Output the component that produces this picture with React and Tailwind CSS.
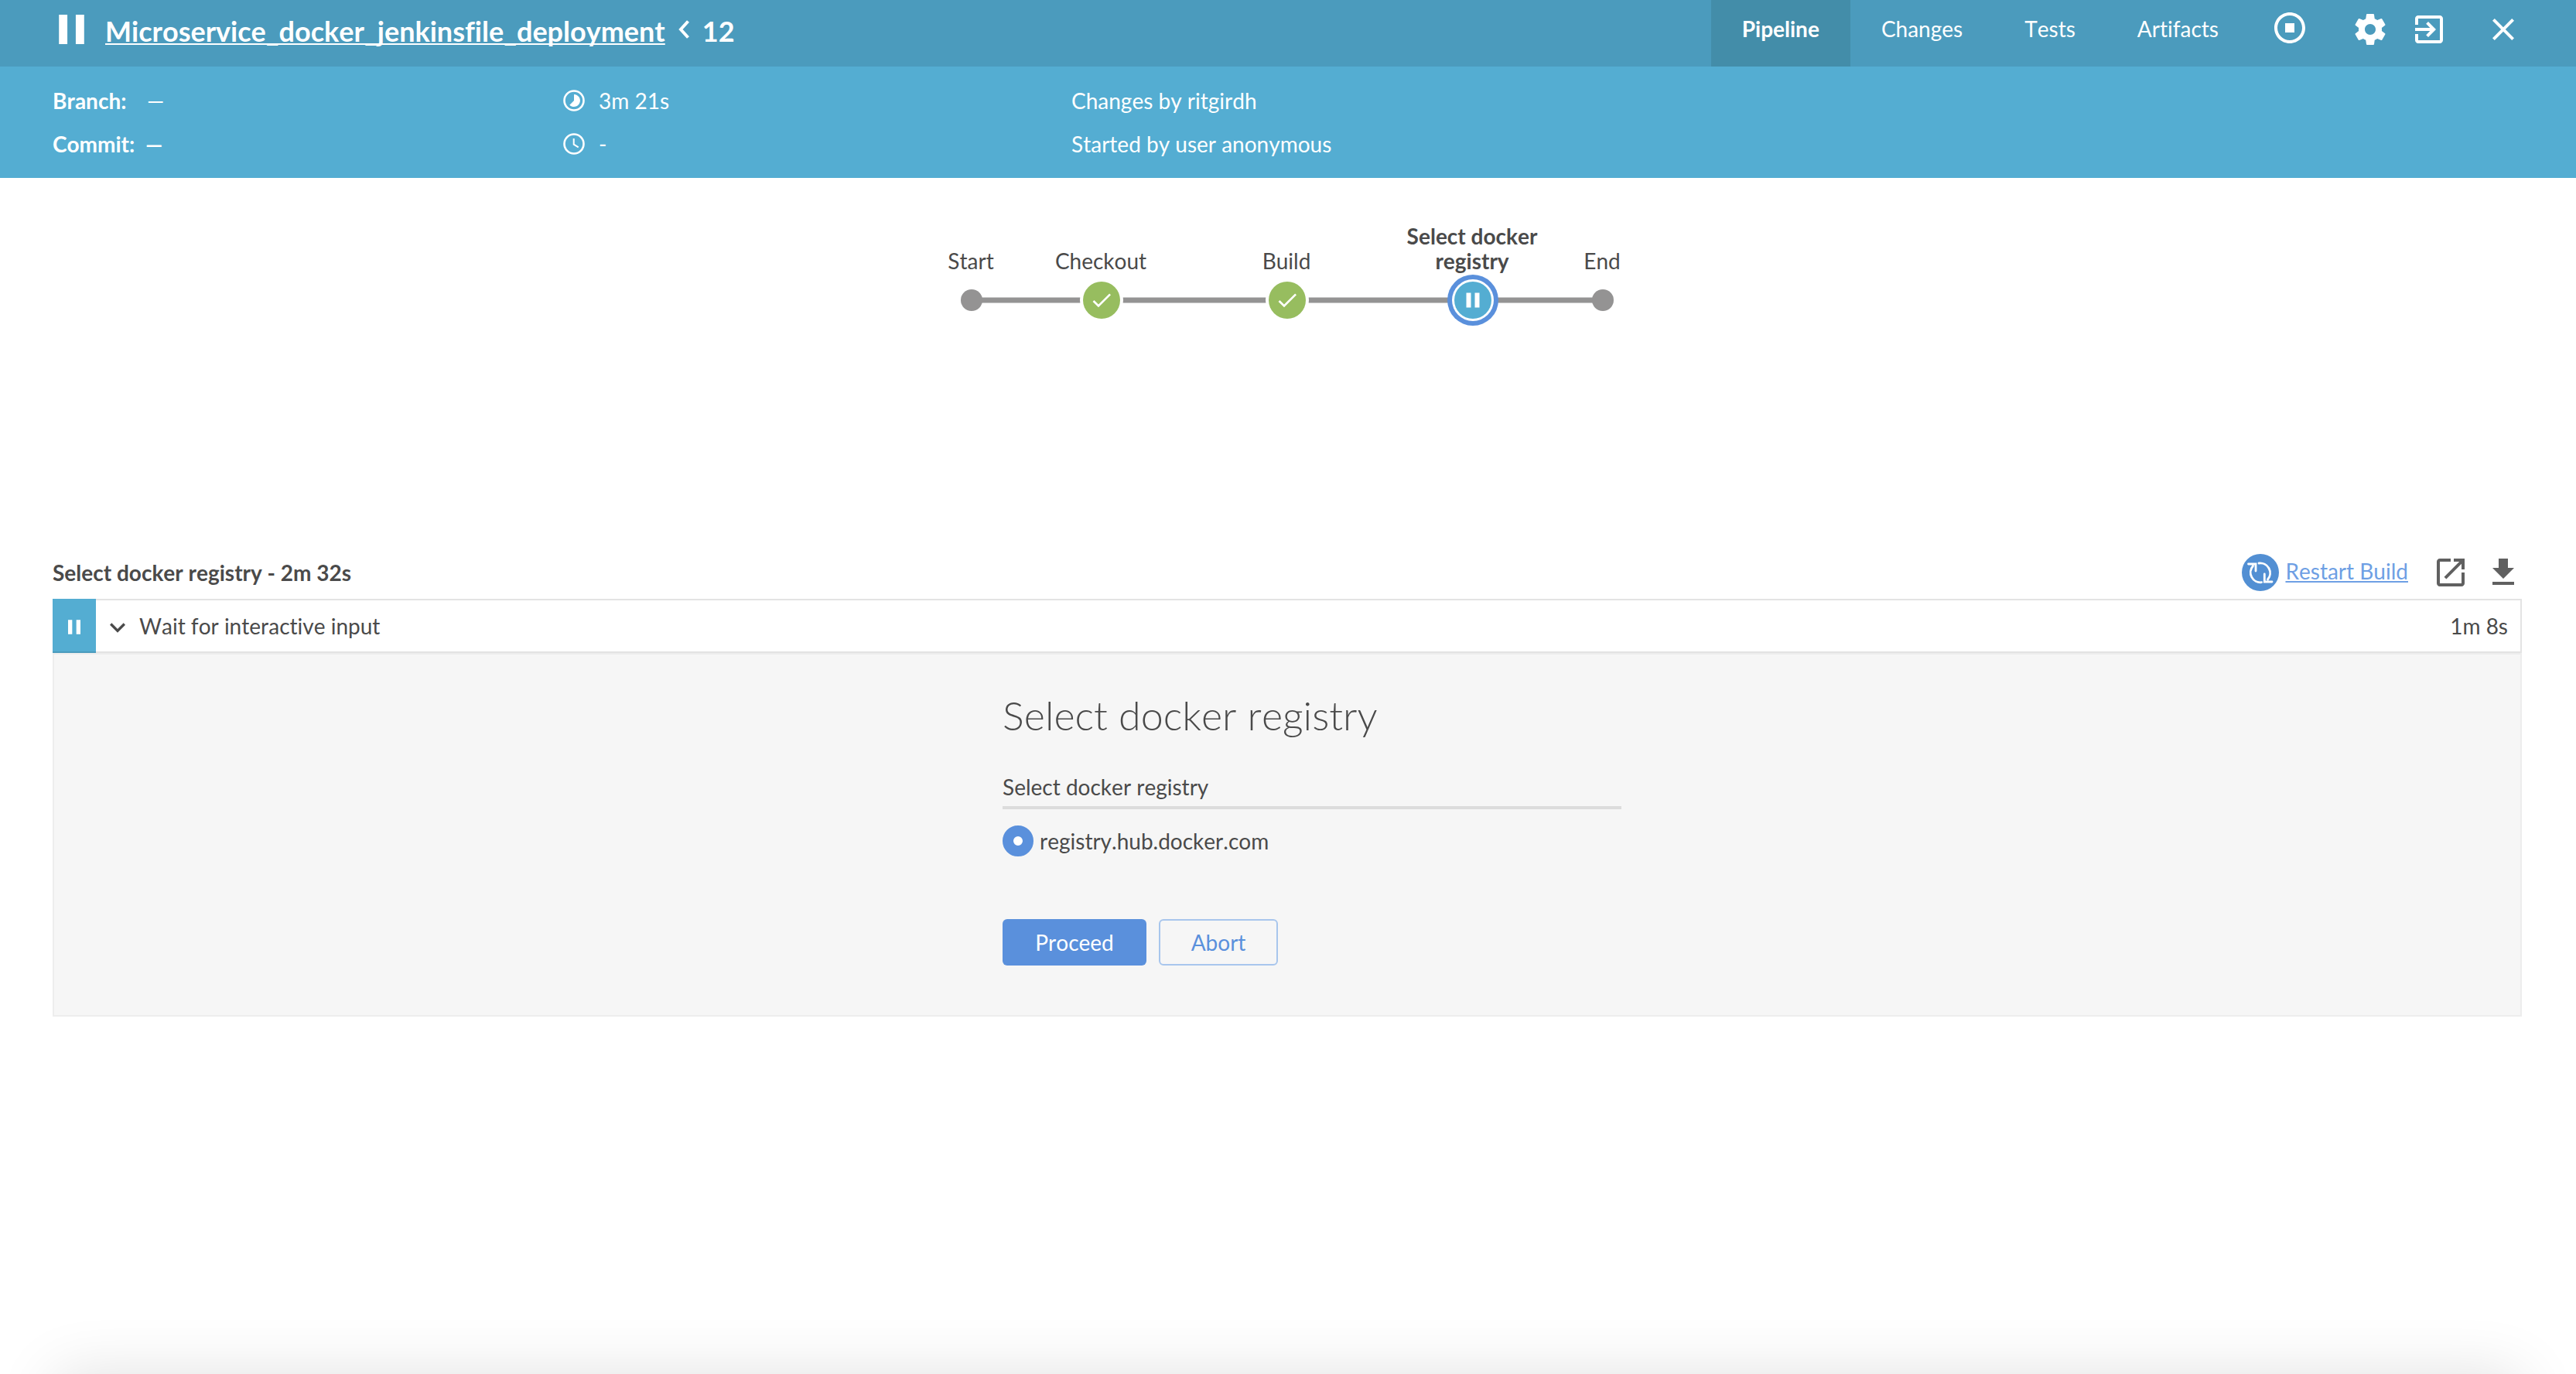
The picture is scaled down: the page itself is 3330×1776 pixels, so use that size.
import React from "react";

const STAGES = [
  { name: "Start", x: 39, kind: "end", place: "left-[38px]" },
  { name: "Checkout", x: 207, kind: "done", place: "left-[206px]" },
  { name: "Build", x: 447, kind: "done", place: "left-[446px]" },
  { name: "Select docker registry", x: 687, kind: "paused", place: "left-[686px]" },
  { name: "End", x: 855, kind: "end", place: "left-[854px]" },
];

const TABS = ["Changes", "Tests", "Artifacts"];

function Icon({ d, className = "size-12" }) {
  return (
    <svg className={className} viewBox="0 0 24 24" fill="currentColor" aria-hidden="true">
      <path d={d} />
    </svg>
  );
}

const ICONS = {
  stop: "M12 2C6.480 2 2 6.480 2 12s4.480 10 10 10 10-4.480 10-10S17.520 2 12 2zm0 18c-4.420 0-8-3.580-8-8s3.580-8 8-8 8 3.580 8 8-3.580 8-8 8zM9 9h6v6H9z",
  settings:
    "M19.430 12.980c.04-.32.07-.64.07-.98s-.03-.66-.07-.98l2.110-1.650c.19-.15.24-.42.12-.64l-2-3.460c-.12-.22-.39-.3-.61-.22l-2.490 1c-.52-.4-1.080-.73-1.690-.98l-.38-2.650C14.460 2.180 14.250 2 14 2h-4c-.25 0-.46.18-.49.42l-.38 2.650c-.61.25-1.170.59-1.690.98l-2.490-1c-.23-.09-.49 0-.61.22l-2 3.460c-.13.22-.07.49.12.64l2.110 1.650c-.04.32-.07.65-.07.98s.03.66.07.98l-2.110 1.650c-.19.15-.24.42-.12.64l2 3.460c.12.22.39.3.61.22l2.490-1c.52.4 1.080.73 1.690.98l.38 2.650c.03.24.24.42.49.42h4c.25 0 .46-.18.49-.42l.38-2.650c.61-.25 1.170-.59 1.690-.98l2.490 1c.23.09.49 0 .61-.22l2-3.460c.12-.22.07-.49-.12-.64l-2.110-1.650zM12 15.500c-1.930 0-3.500-1.570-3.500-3.500s1.570-3.500 3.500-3.500 3.500 1.570 3.500 3.500-1.570 3.500-3.500 3.500z",
  exit: "M10.090 15.590L11.500 17l5-5-5-5-1.410 1.410L12.670 11H3v2h9.670l-2.580 2.590zM19 3H5c-1.110 0-2 .9-2 2v4h2V5h14v14H5v-4H3v4c0 1.100.89 2 2 2h14c1.100 0 2-.9 2-2V5c0-1.100-.9-2-2-2z",
  close: "M19 6.410L17.590 5 12 10.590 6.410 5 5 6.410 10.590 12 5 17.590 6.410 19 12 13.410 17.590 19 19 17.590 13.410 12z",
  open: "M19 19H5V5h7V3H5c-1.110 0-2 .9-2 2v14c0 1.100.89 2 2 2h14c1.100 0 2-.9 2-2v-7h-2v7zM14 3v2h3.590l-9.830 9.830 1.410 1.410L19 6.410V10h2V3h-7z",
  download: "M19 9h-4V3H9v6H5l7 7 7-7zM5 18v2h14v-2H5z",
  expand: "M16.590 8.590L12 13.170 7.410 8.590 6 10l6 6 6-6z",
};

function Pause({ className }) {
  return (
    <svg className={className} viewBox="0 0 12 14" fill="currentColor" aria-hidden="true">
      <path d="M0 0h4v14H0zM8 0h4v14H8z" />
    </svg>
  );
}

function Tab({ active, children }) {
  return (
    <a
      href={"#" + children.toLowerCase()}
      className={"flex h-full items-center px-10 pb-3 " + (active ? "bg-[#438da9] font-bold" : "")}
    >
      {children}
    </a>
  );
}

function Header() {
  return (
    <header className="flex h-[86px] items-center bg-[#4b9bbd] pr-[70px] pl-[76px] text-white">
      <Pause className="mb-2.5 h-[38px] w-[33px]" />
      <h1 className="ml-[27px] flex items-center pb-1.5 text-[36px] leading-[44px] font-bold">
        <a href="#job" className="underline decoration-2 underline-offset-2 [text-decoration-skip-ink:none]">
          Microservice_docker_jenkinsfile_deployment
        </a>
        <svg className="mr-4 mb-1 ml-4 h-6 w-4" viewBox="0 0 16 24" fill="none" stroke="currentColor" strokeWidth="4" aria-hidden="true">
          <path d="M13.500 1.500 4 12l9.500 10.500" />
        </svg>
        <span>12</span>
      </h1>
      <nav className="ml-auto flex h-full">
        <Tab active>Pipeline</Tab>
        {TABS.map((t) => (
          <Tab key={t}>{t}</Tab>
        ))}
      </nav>
      <div className="ml-7 flex items-center pb-2.5">
        <button type="button" aria-label="Stop" className="mr-14 mb-1">
          <Icon d={ICONS.stop} />
        </button>
        <button type="button" aria-label="Configure" className="mr-7">
          <Icon d={ICONS.settings} />
        </button>
        <button type="button" aria-label="Go to classic" className="mr-12">
          <Icon d={ICONS.exit} />
        </button>
        <button type="button" aria-label="Close">
          <Icon d={ICONS.close} />
        </button>
      </div>
    </header>
  );
}

function Info() {
  return (
    <section className="grid h-36 grid-cols-[660px_657px_1fr] content-center gap-y-4 bg-[#54add2] pl-[68px] leading-10 text-white">
      <div className="flex">
        <b className="w-[122px]">Branch:</b>—
      </div>
      <div className="flex items-center gap-4.5">
        <svg className="size-7" viewBox="0 0 28 28" aria-hidden="true">
          <circle cx="14" cy="14" r="12.500" fill="none" stroke="currentColor" strokeWidth="2.600" />
          <path d="M14 14V6a8 8 0 1 1-5.700 13.700z" fill="currentColor" />
        </svg>
        3m 21s
      </div>
      <div>Changes by ritgirdh</div>
      <div className="flex font-bold">
        <span className="w-[120px]">Commit:</span>—
      </div>
      <div className="flex items-center gap-4.5">
        <svg className="size-7" viewBox="0 0 28 28" fill="none" stroke="currentColor" aria-hidden="true">
          <circle cx="14" cy="14" r="12.500" strokeWidth="2.600" />
          <path d="M13.700 7v7.700l6 3.600" strokeWidth="2" />
        </svg>
        -
      </div>
      <div>Started by user anonymous</div>
    </section>
  );
}

function Node({ x, kind }) {
  if (kind === "end") return <circle cx={x} cy="158" r="14" fill="#949393" />;
  if (kind === "done")
    return (
      <g>
        <circle cx={x} cy="158" r="28" fill="#fff" />
        <circle cx={x} cy="158" r="24" fill="#97bd5f" />
        <path transform={`translate(${x - 16} 142) scale(1.333)`} d="M9 16.170L4.830 12l-1.420 1.410L9 19 21 7l-1.410-1.410z" fill="#fff" />
      </g>
    );
  return (
    <g>
      <circle cx={x} cy="158" r="33" fill="#5a90dc" />
      <circle cx={x} cy="158" r="27" fill="#fff" />
      <circle cx={x} cy="158" r="24" fill="#54add2" />
      <path d={`M${x - 8.500} 148.500h6v19h-6zM${x + 2.500} 148.500h6v19h-6z`} fill="#fff" />
    </g>
  );
}

function Graph() {
  return (
    <section className="h-[486px]">
      <div className="relative mx-auto w-[896px]">
        <svg className="h-50 w-full" viewBox="0 0 896 200" aria-hidden="true">
          <path d="M39 158H855" stroke="#949393" strokeWidth="7" />
          {STAGES.map((s) => (
            <Node key={s.name} x={s.x} kind={s.kind} />
          ))}
        </svg>
        {STAGES.map((s) => (
          <div
            key={s.name}
            className={
              "absolute top-[59px] flex h-16 w-45 -translate-x-1/2 items-end justify-center text-center leading-8 " +
              s.place +
              (s.kind === "paused" ? " font-bold" : "")
            }
          >
            {s.name}
          </div>
        ))}
      </div>
    </section>
  );
}

function RestartIcon() {
  return (
    <svg className="size-12" viewBox="0 0 48 48" fill="none" stroke="#fff" strokeWidth="2.800" strokeLinecap="round" aria-hidden="true">
      <circle cx="24" cy="24" r="24" fill="#528fd3" stroke="none" />
      <path d="M8.500 13h9.500v9M14.500 15.500A12.800 12.800 0 0 0 25.500 36.700" />
      <path d="M39 36h-9.700V26M33.500 33A12.800 12.800 0 0 0 22 12" />
    </svg>
  );
}

function Steps() {
  return (
    <section className="pr-[70px] pl-[68px]">
      <div className="flex h-12 items-center">
        <h2 className="font-bold">Select docker registry - 2m 32s</h2>
        <div className="ml-auto flex items-center text-[#606060]">
          <RestartIcon />
          <a href="#restart" className="mr-[31px] mb-1 ml-2 text-[#6e9fe4] underline decoration-2 underline-offset-2">
            Restart Build
          </a>
          <button type="button" aria-label="Open log" className="mr-5">
            <Icon d={ICONS.open} />
          </button>
          <button type="button" aria-label="Download log">
            <Icon d={ICONS.download} />
          </button>
        </div>
      </div>

      <div className="mt-2.5 flex h-[70px]">
        <div className="flex w-14 items-center justify-center border-b-2 border-[#4b9bbd] bg-[#54add2] text-white">
          <Pause className="mt-1 h-[19px] w-4" />
        </div>
        <button type="button" className="flex flex-1 items-center border-2 border-l-0 border-[#e3e3e3] bg-white pr-4 pl-2">
          <Icon d={ICONS.expand} className="mt-1 size-10" />
          <span className="ml-2">Wait for interactive input</span>
          <span className="ml-auto">1m 8s</span>
        </button>
      </div>

      <div className="border-2 border-[#ededed] bg-[#f6f6f6] pt-12 pb-16">
        <form className="mx-auto w-[864px] pl-16" onSubmit={(e) => e.preventDefault()}>
          <h3 className="text-[52px] leading-[60px] font-light">Select docker registry</h3>
          <fieldset className="mt-[43px]">
            <legend className="w-full border-b-4 border-[#dcdcdc] pb-[5px] leading-10">Select docker registry</legend>
            <label className="mt-5 flex items-center gap-2">
              <input
                type="radio"
                name="registry"
                defaultChecked
                className="size-10 appearance-none rounded-full border-[14px] border-[#5a90dc] bg-white"
              />
              registry.hub.docker.com
            </label>
          </fieldset>
          <div className="mt-20 flex gap-4">
            <button type="submit" className="h-[60px] w-[186px] rounded-md bg-[#5a90dc] text-white">
              Proceed
            </button>
            <button type="button" className="h-[60px] w-[154px] rounded-md border-2 border-[#a8c6ed] text-[#5a90dc]">
              Abort
            </button>
          </div>
        </form>
      </div>
    </section>
  );
}

export default function App() {
  return (
    <div className="flex min-h-screen flex-col overflow-hidden bg-white font-[Lato,sans-serif] text-[28px] text-[#4a4a4a] [font-kerning:none] [font-variant-ligatures:none]">
      <Header />
      <Info />
      <Graph />
      <Steps />
      <div className="mx-18 mt-auto -mb-40 h-40 shadow-[0_0_80px_rgba(0,0,0,0.12)]" />
    </div>
  );
}
